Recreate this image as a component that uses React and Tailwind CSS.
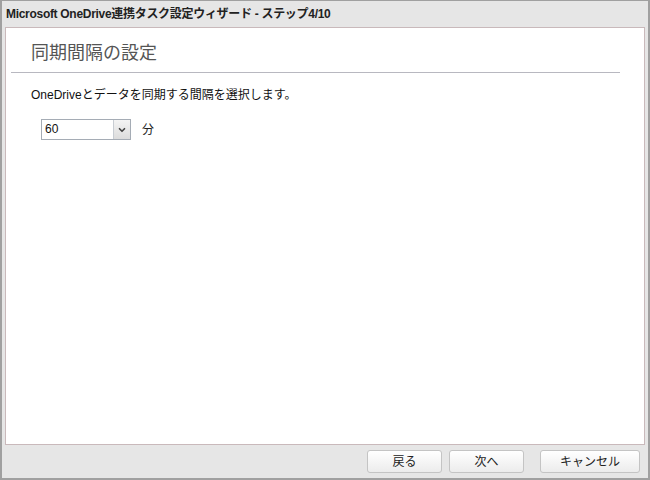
import { ChevronDown } from "lucide-react";

const font = { fontFamily: '"Liberation Sans", "Noto Sans CJK JP", sans-serif' };

function Boton({ children, className }) {
  return (
    <button
      className={`h-[23px] rounded-[3px] border border-[#c4c4c4] bg-gradient-to-b from-white to-[#ececec] text-[12px] text-[#222] ${className}`}
    >
      {children}
    </button>
  );
}

export default function App() {
  return (
    <div
      style={font}
      className="w-[650px] h-[480px] bg-[#e6e6e6] border-t border-l-2 border-r-2 border-b-2 border-[#a0a0a0] flex flex-col overflow-hidden"
    >
      {/* barra de título */}
      <div className="h-[26px] pl-[4px] pt-[5px] text-[12px] font-bold text-[#222] leading-[16px] tracking-[-0.3px]">
        Microsoft OneDrive連携タスク設定ウィザード - ステップ4/10
      </div>

      {/* panel principal */}
      <div className="ml-[3px] mr-[3px] h-[418px] bg-white border border-[#c9b9bb] pl-[5px] pr-[24px]">
        <div className="pl-[20px] pt-[13px] h-[45px] text-[18px] text-[#555] leading-[24px] border-b border-[#b8b8c0]">
          同期間隔の設定
        </div>
        <p className="pl-[20px] mt-[14px] text-[12px] text-[#111] leading-[16px]">
          OneDriveとデータを同期する間隔を選択します。
        </p>
        <div className="pl-[30px] mt-[16px] flex items-center gap-[11px]">
          <div className="w-[90px] h-[21px] border border-[#a5acb5] flex">
            <span className="flex-1 pl-[3px] text-[12px] leading-[19px] text-[#111]">60</span>
            <span className="w-[17px] border-l border-[#c8cdd3] bg-gradient-to-b from-[#f4f4f4] to-[#dcdcdc] flex items-center justify-center">
              <ChevronDown size={10} strokeWidth={4} className="text-[#444]" />
            </span>
          </div>
          <span className="text-[12px] text-[#222]">分</span>
        </div>
      </div>

      {/* botones */}
      <div className="flex pt-[5px] pl-[365px] gap-[7px]">
        <Boton className="w-[75px]">戻る</Boton>
        <Boton className="w-[75px]">次へ</Boton>
        <Boton className="w-[100px] ml-[9px]">キャンセル</Boton>
      </div>
    </div>
  );
}
